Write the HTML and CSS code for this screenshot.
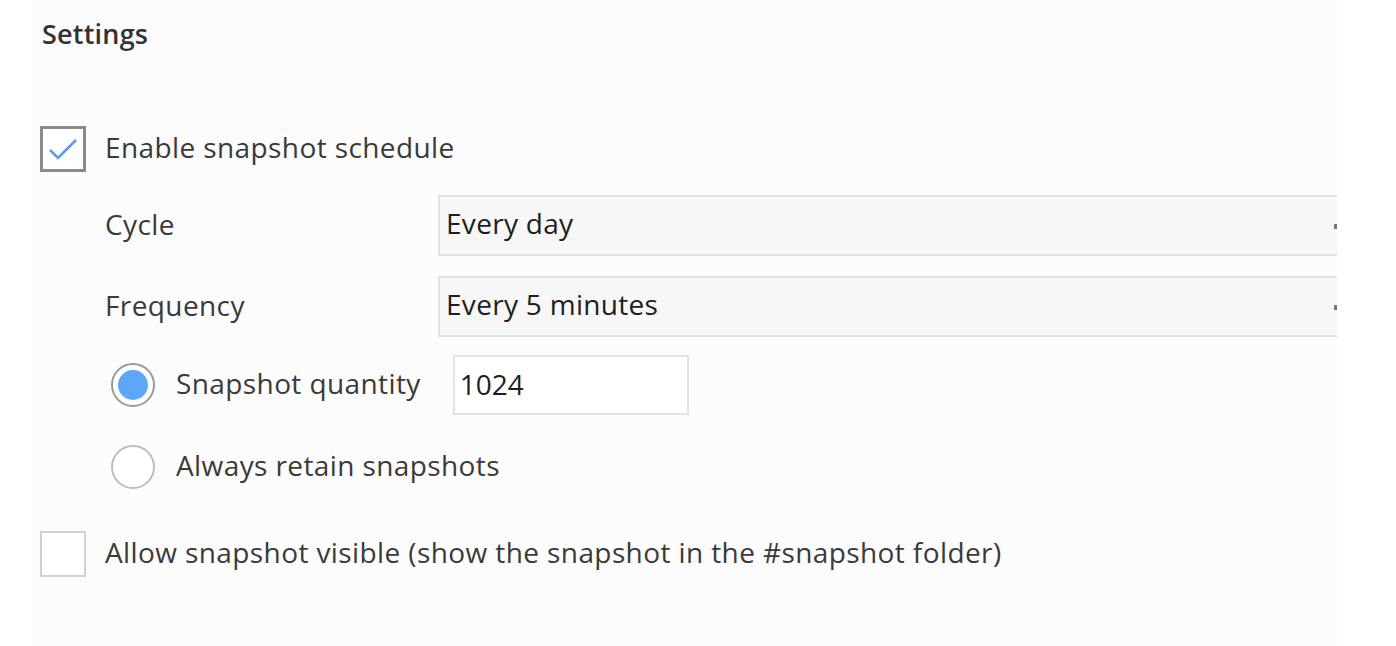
FILE: index.html
```html
<!DOCTYPE html>
<html lang="en">
<head>
    <meta charset="UTF-8">
    <title>Snapshot Settings</title>
    <link rel="stylesheet" href="styles.css">
</head>
<body>
    <div class="page">
        <div class="gutter"></div>
        <div class="panel">
            <h2 class="title">Settings</h2>

            <!-- schedule -->
            <div class="check-row first">
                <span class="box checked">
                    <svg width="32" height="26" viewBox="0 0 32 26"><path d="M3 14 L11 22 L29 4" fill="none" stroke="#5a9ee0" stroke-width="2.6"/></svg>
                </span>
                <span class="label">Enable snapshot schedule</span>
            </div>

            <div class="field-row">
                <span class="field-label">Cycle</span>
                <div class="select">Every day</div>
            </div>
            <div class="field-row">
                <span class="field-label">Frequency</span>
                <div class="select">Every 5 minutes</div>
            </div>

            <div class="radio-row">
                <span class="radio on"><span class="dot"></span></span>
                <span class="label">Snapshot quantity</span>
                <div class="num">1024</div>
            </div>
            <div class="radio-row second">
                <span class="radio"></span>
                <span class="label">Always retain snapshots</span>
            </div>

            <div class="check-row last">
                <span class="box"></span>
                <span class="label">Allow snapshot visible (show the snapshot in the #snapshot folder)</span>
            </div>
        </div>
    </div>
</body>
</html>
```

FILE: styles.css
```css
body {
    margin: 0;
    background-color: #fff;
    font-family: "Open Sans", "Noto Sans", sans-serif;
    color: #3a3a3a;
}
.page {
    display: flex;
    height: 646px;
}
.gutter {
    width: 32px;
    flex-shrink: 0;
}
.panel {
    width: 1305px;
    flex-shrink: 0;
    background-color: #fcfcfc;
    padding-left: 8px;
    box-sizing: border-box;
    overflow: hidden;
}
.title {
    margin: 0;
    height: 68px;
    line-height: 68px;
    padding-left: 2px;
    font-size: 27px;
    font-weight: 600;
    letter-spacing: 0.2px;
    color: #333;
}
.label,
.field-label {
    font-size: 28px;
    letter-spacing: 0.4px;
    color: #3a3a3a;
    padding-bottom: 4px;
}
.check-row {
    display: flex;
    align-items: center;
    height: 46px;
}
.check-row.first {
    margin-top: 58px;
}
.check-row.last {
    margin-top: 34px;
}
.box {
    width: 46px;
    height: 46px;
    box-sizing: border-box;
    border: 2px solid #d0d0d0;
    background-color: #fff;
    margin-right: 19px;
    display: flex;
    align-items: center;
    justify-content: center;
}
.box.checked {
    border: 3px solid #8a8a8a;
}
.field-row {
    display: flex;
    align-items: center;
    padding-left: 65px;
    height: 61px;
}
.field-row + .field-row {
    margin-top: 20px;
}
.check-row + .field-row {
    margin-top: 23px;
}
.field-label {
    width: 333px;
    flex-shrink: 0;
}
.select {
    flex: 1;
    height: 61px;
    box-sizing: border-box;
    border: 2px solid #e3e3e3;
    border-right: none;
    background-color: #f7f7f7;
    padding-left: 6px;
    line-height: 53px;
    font-size: 28px;
    letter-spacing: 0.3px;
    color: #1e1e1e;
    position: relative;
}
.select::after {
    content: "";
    position: absolute;
    right: 0;
    top: 27px;
    width: 3px;
    height: 5px;
    background-color: #777;
}
.radio-row {
    display: flex;
    align-items: center;
    padding-left: 71px;
    height: 60px;
    margin-top: 18px;
}
.radio-row.second {
    margin-top: 22px;
}
.radio {
    width: 44px;
    height: 44px;
    box-sizing: border-box;
    border: 2px solid #bdbdbd;
    border-radius: 50%;
    background-color: #fff;
    margin-right: 21px;
    display: flex;
    align-items: center;
    justify-content: center;
}
.radio.on {
    border-color: #9a9a9a;
}
.dot {
    width: 30px;
    height: 30px;
    border-radius: 50%;
    background-color: #5ea6f7;
}
.num {
    margin-left: 32px;
    width: 236px;
    height: 60px;
    box-sizing: border-box;
    border: 2px solid #e2e2e2;
    background-color: #fff;
    padding-left: 5px;
    line-height: 54px;
    font-size: 28px;
    color: #1e1e1e;
}
```
